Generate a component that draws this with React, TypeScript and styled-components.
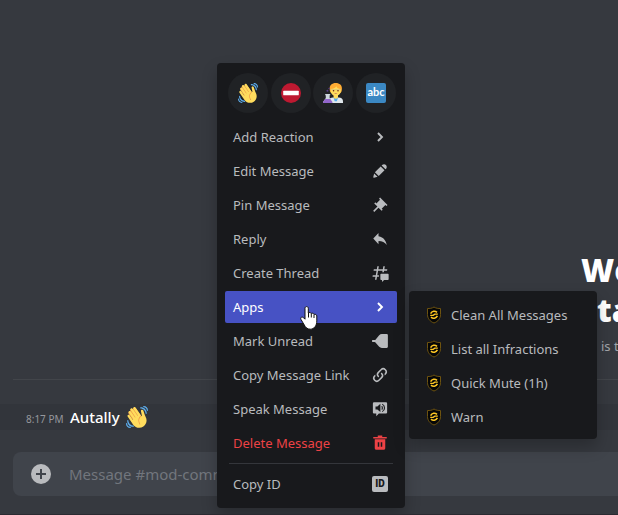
import React from "react";
import styled, { createGlobalStyle, css } from "styled-components";

const GlobalStyle = createGlobalStyle`
  * { box-sizing: border-box; }
  body {
    margin: 0;
    background: #36393f;
    color: #b9bbbe;
    font-family: "Noto Sans", "Open Sans", sans-serif;
    font-size: 13px;
  }
  button, input { font: inherit; }
  ul { list-style: none; margin: 0; padding: 0; }
`;

const Page = styled.main`
  position: relative;
  display: flex;
  flex-direction: column;
  justify-content: flex-end;
  min-height: 100vh;
  overflow: hidden;
  background: #36393f;
  border-bottom: 1px solid #2b2a31;
`;

const Welcome = styled.header`
  align-self: flex-end;
  width: 37px;
  white-space: nowrap;
`;

const Title = styled.h1`
  margin: 0;
  color: #fff;
  font-family: "Open Sans", "Noto Sans", sans-serif;
  font-size: 32px;
  font-weight: 800;
  line-height: 40px;
`;

const TitleLine = styled.span<{ $indent?: boolean }>`
  display: block;
  padding-left: ${(p) => (p.$indent ? "16px" : "0")};
`;

const Intro = styled.p`
  margin: 6px 0 0;
  padding-left: 20px;
  color: #a3a6aa;
  line-height: 20px;
`;

const Divider = styled.hr`
  width: auto;
  height: 1px;
  margin: 23px 0 24px 13px;
  border: 0;
  background: #42454a;
`;

const MessageRow = styled.article`
  display: flex;
  align-items: center;
  height: 26px;
  padding-left: 26px;
  background: #32353b;
`;

const Time = styled.time`
  width: 44px;
  padding-top: 3px;
  color: #96989d;
  font-size: 10px;
  white-space: nowrap;
`;

const Author = styled.strong`
  margin-right: 6px;
  color: #fff;
  font-size: 15px;
  font-weight: 500;
`;

const Composer = styled.form`
  display: flex;
  align-items: center;
  gap: 16px;
  height: 44px;
  margin: 22px 0 18px 13px;
  padding-left: 16px;
  border-radius: 8px 0 0 8px;
  background: #40444b;
`;

const AttachButton = styled.button`
  display: flex;
  padding: 0;
  border: 0;
  background: none;
  color: #b9bbbe;
`;

const MessageInput = styled.input`
  flex: 1;
  min-width: 0;
  padding: 0;
  border: 0;
  outline: 0;
  background: none;
  color: #dcddde;
  font-size: 15px;
  &::placeholder { color: #72767d; opacity: 1; }
`;

const panel = css`
  position: absolute;
  width: 188px;
  padding: 8px;
  border-radius: 4px;
  background: #18191c;
  box-shadow: 0 8px 16px rgba(0, 0, 0, 0.24);
`;

const ContextMenu = styled.nav`
  ${panel}
  top: 63px;
  left: 217px;
`;

const Submenu = styled.ul`
  ${panel}
  top: 0;
  left: calc(100% + 12px);
  display: grid;
  gap: 2px;
  padding-bottom: 6px;
`;

const QuickReactions = styled.div`
  display: flex;
  justify-content: space-between;
  padding: 2px 1px 8px 3px;
`;

const ReactionButton = styled.button`
  display: flex;
  align-items: center;
  justify-content: center;
  width: 40px;
  height: 40px;
  padding: 0;
  border: 0;
  border-radius: 50%;
  background: #202225;
`;

const MenuList = styled.ul`
  display: grid;
  gap: 2px;
`;

const MenuEntry = styled.li`
  position: relative;
`;

const MenuButton = styled.button<{ $tone?: "normal" | "active" | "danger"; $lead?: boolean }>`
  display: flex;
  align-items: center;
  justify-content: ${(p) => (p.$lead ? "flex-start" : "space-between")};
  gap: 8px;
  width: 100%;
  height: 32px;
  padding: 0 8px;
  border: 0;
  border-radius: 2px;
  background: ${(p) => (p.$tone === "active" ? "#4752c4" : "transparent")};
  color: ${(p) => (p.$tone === "active" ? "#fff" : p.$tone === "danger" ? "#ed4245" : "#b9bbbe")};
  line-height: 18px;
  white-space: nowrap;
  text-align: left;
`;

const MenuDivider = styled.hr`
  height: 1px;
  margin: 4px;
  border: 0;
  background: #34363b;
`;

const IdBadge = styled.span`
  width: 16px;
  height: 16px;
  margin-right: 1px;
  border-radius: 2px;
  background: #b9bbbe;
  color: #18191c;
  font-family: Roboto, sans-serif;
  font-size: 10px;
  font-weight: 900;
  line-height: 16px;
  text-align: center;
`;

const AbcTile = styled.span`
  width: 20px;
  height: 20px;
  border-radius: 2px;
  background: #3b88c3;
  color: #fff;
  font-family: Lato, sans-serif;
  font-size: 11px;
  font-weight: 700;
  line-height: 18px;
  text-align: center;
`;

const Pointer = styled.svg`
  position: absolute;
  top: 15px;
  left: 75px;
  pointer-events: none;
`;

const Glyph = ({ children }: { children: React.ReactNode }) => (
  <svg width="18" height="18" viewBox="0 0 24 24" fill="currentColor" aria-hidden="true">
    {children}
  </svg>
);

const Wave = ({ size }: { size: number }) => (
  <svg width={size} height={size} viewBox="0 0 36 36" aria-hidden="true">
    <path fill="#EF9645" d="M4.861 9.147c.94-.657 2.357-.531 3.201.166l-.968-1.407c-.779-1.111-.5-2.313.612-3.093 1.112-.777 4.263 1.312 4.263 1.312-.786-1.122-.639-2.544.483-3.331 1.122-.784 2.67-.513 3.456.611l10.292 14.72L25 31l-11.083-4.042L4.25 12.625c-.793-1.129-.519-2.686.611-3.478z" />
    <path fill="#FFDC5D" d="M2.695 17.336s-1.132-1.65.519-2.781c1.649-1.131 2.78.518 2.78.518l5.251 7.658c.181-.302.379-.6.6-.894L4.557 11.21s-1.131-1.649.519-2.78c1.649-1.131 2.78.518 2.78.518l6.855 9.997c.255-.208.516-.417.785-.622L7.549 6.732s-1.131-1.649.519-2.78c1.649-1.131 2.78.518 2.78.518l7.947 11.589c.292-.179.581-.334.871-.498L12.238 4.729s-1.131-1.649.518-2.78c1.649-1.131 2.78.518 2.78.518l7.854 11.454 1.194 1.742c-4.948 3.394-5.419 9.779-2.592 13.902.565.825 1.39.26 1.39.26-3.393-4.949-2.357-10.51 2.592-13.903L24.515 8.62s-.545-1.924 1.378-2.47c1.924-.545 2.47 1.379 2.47 1.379l1.685 5.004c.668 1.984 1.379 3.961 2.32 5.831 2.657 5.28 1.07 11.842-3.94 15.279-5.465 3.747-12.936 2.354-16.684-3.11L2.695 17.336z" />
    <g fill="#5DADEC">
      <path d="M12 32.042C8 32.042 3.958 28 3.958 24c0-.553-.405-1-.958-1s-1.042.447-1.042 1C1.958 30 6 34.042 12 34.042c.553 0 1-.489 1-1.042s-.447-.958-1-.958z" />
      <path d="M7 34c-3 0-5-2-5-5 0-.553-.447-1-1-1s-1 .447-1 1c0 4 3 7 7 7 .553 0 1-.447 1-1s-.447-1-1-1zM24 2c-.552 0-1 .448-1 1s.448 1 1 1c4 0 8 3.589 8 8 0 .552.448 1 1 1s1-.448 1-1c0-5.514-4-10-10-10z" />
      <path d="M29 .042c-.552 0-1 .406-1 .958s.448 1.042 1 1.042c3 0 4.958 2.225 4.958 4.958 0 .552.489 1 1.042 1s.958-.448.958-1C35.958 3.163 33 .042 29 .042z" />
    </g>
  </svg>
);

const NoEntry = () => (
  <svg width="20" height="20" viewBox="0 0 36 36" aria-hidden="true">
    <circle cx="18" cy="18" r="18" fill="#BE1931" />
    <rect x="4" y="14" width="28" height="8" rx="1" fill="#fff" />
  </svg>
);

const Scientist = () => (
  <svg width="20" height="20" viewBox="0 0 36 36" aria-hidden="true">
    <path fill="#E1E8ED" d="M11 36v-4c0-4 3-6 7-6h10c5 0 8 3 8 7v3z" />
    <path fill="#55ACEE" d="M19 26h8l-2 7h-4z" />
    <path fill="#FFDC5D" d="M19 20h8v6c-2 3-6 3-8 0z" />
    <path fill="#FFAC33" d="M23 0c7 0 11 4 11 10 0 5-1 7-3 8H15c-2-1-3-3-3-8C12 4 16 0 23 0z" />
    <path fill="#FFDC5D" d="M14 11c4 0 8-2 10-5 1 3 4 5 8 5v3c0 6-4 9-9 9s-9-3-9-9z" />
    <path fill="none" stroke="#C7B98A" strokeWidth="1" d="M14 12h18" />
    <circle cx="19" cy="14" r="1.4" fill="#662113" />
    <circle cx="27" cy="14" r="1.4" fill="#662113" />
    <path fill="#C1694F" d="M20 18h6c-1 2-5 2-6 0z" />
    <path fill="#CCD6DD" d="M4 20h9v2h-1v5l5 7c1 1 0 2-1 2H1c-1 0-2-1-1-2l5-7v-5H4z" />
    <path fill="#9266CC" d="M4 29h9l4 5c0 1 0 2-1 2H1c-1 0-1-1-1-2z" />
    <circle cx="8" cy="14" r="1.8" fill="#553986" />
    <circle cx="11" cy="10" r="1.400" fill="#553986" />
  </svg>
);

const Shield = () => (
  <svg width="18" height="18" viewBox="0 0 18 18" aria-hidden="true">
    <path fill="#050607" stroke="#6e530f" d="M9 1C7 2.400 4.500 2.600 2.500 2.500V8.500C2.500 12.500 5 15.500 9 17C13 15.500 15.500 12.500 15.500 8.500V2.500C13.500 2.600 11 2.400 9 1Z" />
    <g fill="none" stroke="#ffc824">
      <path strokeWidth="1.600" d="M5.600 7.600C7 5 10 4.600 12 6.300M12.400 9.900C11 12.500 8 12.900 6 11.200" />
      <path strokeWidth="1.300" d="M12.800 8.200H9.800L8.200 9.300H5.200" />
    </g>
  </svg>
);

const Chevron = () => (
  <Glyph>
    <path fill="none" stroke="currentColor" strokeWidth="2.600" d="M9.300 6.700 14.600 12l-5.300 5.300" />
  </Glyph>
);

type Entry = { label: string; icon: React.ReactNode; tone?: "active" | "danger" };

const entries: Entry[] = [
  { label: "Add Reaction", icon: <Chevron /> },
  {
    label: "Edit Message",
    icon: <Glyph><path d="M19.2929 9.8299L19.9409 9.18278C21.353 7.77064 21.353 5.47197 19.9409 4.05892C18.5287 2.64678 16.2292 2.64678 14.817 4.05892L14.1699 4.70694L19.2929 9.8299ZM12.8962 5.97688L5.18469 13.6906L10.3085 18.813L18.0201 11.0992L12.8962 5.97688ZM4.11851 20.9704L8.75906 19.8112L4.18692 15.239L3.02678 19.8796C2.95028 20.1856 3.04028 20.5105 3.26349 20.7337C3.48669 20.9569 3.8116 21.046 4.11851 20.9704Z" /></Glyph>,
  },
  {
    label: "Pin Message",
    icon: <Glyph><path d="M22 12L12.101 2.10101L10.686 3.51401L12.101 4.92901L7.15096 9.87801V9.88001L5.73596 8.46501L4.32196 9.88001L8.56496 14.122L2.90796 19.778L4.32196 21.192L9.97896 15.536L14.222 19.778L15.636 18.364L14.222 16.95L19.171 12H19.172L20.586 13.414L22 12Z" /></Glyph>,
  },
  {
    label: "Reply",
    icon: <Glyph><path d="M10 8.26667V4L3 11.4667L10 18.9333V14.56C15 14.56 18.5 16.2667 21 20C20 14.6667 17 9.33333 10 8.26667Z" /></Glyph>,
  },
  {
    label: "Create Thread",
    icon: (
      <Glyph>
        <path d="M5.43309 21C5.35842 21 5.30189 20.9325 5.31494 20.859L5.99991 17H2.14274C2.06819 17 2.01168 16.9327 2.02453 16.8593L2.33253 15.0993C2.34258 15.0419 2.39244 15 2.45074 15H6.34991L7.40991 9H3.55274C3.47819 9 3.42168 8.93274 3.43453 8.85931L3.74253 7.09931C3.75258 7.04189 3.80244 7 3.86074 7H7.75991L8.45234 3.09903C8.46251 3.04174 8.51231 3 8.57049 3H10.3267C10.4014 3 10.4579 3.06746 10.4449 3.14097L9.75991 7H15.7599L16.4523 3.09903C16.4625 3.04174 16.5123 3 16.5705 3H18.3267C18.4014 3 18.4579 3.06746 18.4449 3.14097L17.7599 7H21.6171C21.6916 7 21.7481 7.06725 21.7353 7.14069L21.4273 8.90069C21.4172 8.95811 21.3674 9 21.3091 9H17.4099L17.0495 11.04H15.05L15.4104 9H9.41035L8.35035 15H10.5599V17H7.99991L7.30749 20.901C7.29732 20.9583 7.24752 21 7.18934 21H5.43309Z" />
        <path d="M13.4399 12.96C12.9097 12.96 12.4799 13.3898 12.4799 13.92V20.2213C12.4799 20.7515 12.9097 21.1813 13.4399 21.1813H14.3999C14.5325 21.1813 14.6399 21.2887 14.6399 21.4213V23.4597C14.6399 23.6677 14.8865 23.7773 15.0408 23.6378L17.4858 21.4289C17.6622 21.2695 17.8916 21.1813 18.1294 21.1813H22.5599C23.0901 21.1813 23.5199 20.7515 23.5199 20.2213V13.92C23.5199 13.3898 23.0901 12.96 22.5599 12.96H13.4399Z" />
      </Glyph>
    ),
  },
  { label: "Apps", icon: <Chevron />, tone: "active" },
  {
    label: "Mark Unread",
    icon: <Glyph><path d="M21 2.700h-6.500c-1.400 0-2.600.5-3.600 1.500L6.500 9.500c-.6.800-1 1.200-1.800 1.200H1.500v2.600h3.200c.8 0 1.200.4 1.800 1.200l4.400 5.300c1 1 2.200 1.500 3.600 1.500H21a1.500 1.500 0 0 0 1.500-1.500V4.200A1.500 1.500 0 0 0 21 2.700z" /></Glyph>,
  },
  {
    label: "Copy Message Link",
    icon: <Glyph><path d="M10.59 13.41c.41.39.41 1.03 0 1.42-.39.39-1.03.39-1.42 0a5.003 5.003 0 0 1 0-7.07l3.54-3.54a5.003 5.003 0 0 1 7.07 0 5.003 5.003 0 0 1 0 7.07l-1.49 1.49c.01-.82-.12-1.64-.4-2.42l.47-.48a2.982 2.982 0 0 0 0-4.24 2.982 2.982 0 0 0-4.24 0l-3.53 3.53a2.982 2.982 0 0 0 0 4.24zm2.82-4.24c.39-.39 1.03-.39 1.42 0a5.003 5.003 0 0 1 0 7.07l-3.54 3.54a5.003 5.003 0 0 1-7.07 0 5.003 5.003 0 0 1 0-7.07l1.49-1.49c-.01.82.12 1.64.4 2.43l-.47.47a2.982 2.982 0 0 0 0 4.24 2.982 2.982 0 0 0 4.24 0l3.53-3.53a2.982 2.982 0 0 0 0-4.24.973.973 0 0 1 0-1.42z" /></Glyph>,
  },
  {
    label: "Speak Message",
    icon: (
      <Glyph>
        <path d="M4 3h16a1.500 1.500 0 0 1 1.500 1.500v12A1.500 1.500 0 0 1 20 18h-9.500L7 21.500V18H4a1.500 1.500 0 0 1-1.500-1.500v-12A1.500 1.500 0 0 1 4 3z" />
        <path fill="#18191c" d="M6 8.500h2.500L12.500 5v11l-4-3.500H6z" />
        <path fill="none" stroke="#18191c" strokeWidth="1.500" d="M14.200 8.300a3 3 0 0 1 0 4.400M15 5.500c4 2.200 4 7.800 0 10" />
      </Glyph>
    ),
  },
  {
    label: "Delete Message",
    tone: "danger",
    icon: (
      <Glyph>
        <path d="M15 3.999V2H9V3.999H3V5.999H21V3.999H15Z" />
        <path d="M5 6.99902V18.999C5 20.101 5.897 20.999 7 20.999H17C18.103 20.999 19 20.101 19 18.999V6.99902H5ZM11 17H9V11H11V17ZM15 17H13V11H15V17Z" />
      </Glyph>
    ),
  },
];

const apps = ["Clean All Messages", "List all Infractions", "Quick Mute (1h)", "Warn"];

const AppsSubmenu = () => (
  <Submenu aria-label="Apps">
    {apps.map((name) => (
      <li key={name}>
        <MenuButton type="button" $lead>
          <Shield />
          {name}
        </MenuButton>
      </li>
    ))}
  </Submenu>
);

const HandPointer = () => (
  <Pointer width="18" height="24" viewBox="0 0 18 24" aria-hidden="true">
    <path
      fill="#fff"
      stroke="#111"
      d="M5 2.300c0-2.300 3.300-2.300 3.300 0V7c.8-.8 2.500-.6 2.800.5.900-.6 2.500-.3 2.800.9 1.300-.4 2.900.2 2.900 1.500v5c0 4.500-2.500 8.300-6.500 8.300-3 0-4.800-1.800-6-4.200L1 13.500c-1-2 1-3.200 2.500-1.800L5 13.200z"
    />
    <path stroke="#111" d="M8.500 7v4.500M11.300 8v3.500M14 9v3" />
  </Pointer>
);

export default function App() {
  return (
    <Page>
      <GlobalStyle />
      <Welcome>
        <Title>
          <TitleLine>We</TitleLine>
          <TitleLine $indent>ta</TitleLine>
        </Title>
        <Intro>is t</Intro>
      </Welcome>
      <Divider />
      <MessageRow>
        <Time>8:17 PM</Time>
        <Author>Autally</Author>
        <Wave size={22} />
      </MessageRow>
      <Composer>
        <AttachButton type="button" aria-label="Attach">
          <svg width="24" height="24" viewBox="0 0 24 24" aria-hidden="true">
            <circle cx="12" cy="12" r="10" fill="currentColor" />
            <path fill="#40444b" d="M11 7h2v4h4v2h-4v4h-2v-4H7v-2h4z" />
          </svg>
        </AttachButton>
        <MessageInput aria-label="Message" placeholder="Message #mod-comm" />
      </Composer>

      <ContextMenu aria-label="Message actions">
        <QuickReactions>
          <ReactionButton type="button" aria-label="Wave"><Wave size={20} /></ReactionButton>
          <ReactionButton type="button" aria-label="No entry"><NoEntry /></ReactionButton>
          <ReactionButton type="button" aria-label="Scientist"><Scientist /></ReactionButton>
          <ReactionButton type="button"><AbcTile>abc</AbcTile></ReactionButton>
        </QuickReactions>
        <MenuList>
          {entries.map((entry) => (
            <MenuEntry key={entry.label}>
              <MenuButton type="button" $tone={entry.tone}>
                {entry.label}
                {entry.icon}
              </MenuButton>
              {entry.tone === "active" && (
                <>
                  <AppsSubmenu />
                  <HandPointer />
                </>
              )}
            </MenuEntry>
          ))}
        </MenuList>
        <MenuDivider />
        <MenuButton type="button">
          Copy ID
          <IdBadge>ID</IdBadge>
        </MenuButton>
      </ContextMenu>
    </Page>
  );
}
